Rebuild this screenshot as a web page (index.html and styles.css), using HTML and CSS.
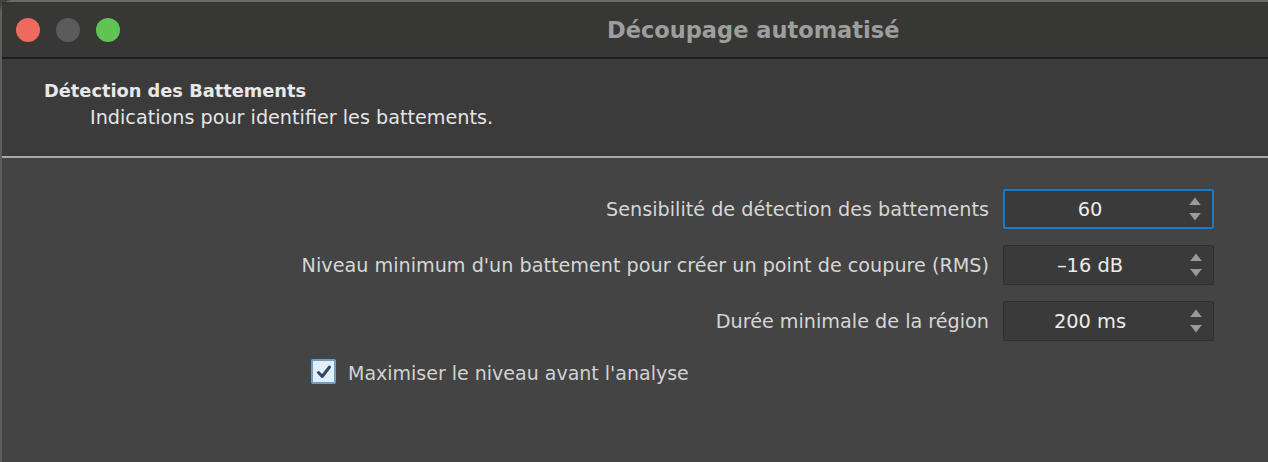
FILE: index.html
```html
<!DOCTYPE html>
<html lang="fr">
<head>
<meta charset="utf-8">
<title>Découpage automatisé</title>
<link rel="stylesheet" href="styles.css">
</head>
<body>
<div class="window">
  <div class="titlebar">
    <div class="lights">
      <span class="light red"></span>
      <span class="light gray"></span>
      <span class="light green"></span>
    </div>
    <div class="title">Découpage automatisé</div>
  </div>
  <div class="header">
    <div class="h-title">Détection des Battements</div>
    <div class="h-sub">Indications pour identifier les battements.</div>
  </div>
  <div class="content">
    <div class="rows">
      <div class="row">
        <label class="label">Sensibilité de détection des battements</label>
        <div class="spin focused">
          <span class="val">60</span>
          <svg class="arrows" width="12" height="26" viewBox="0 0 12 26"><path d="M6 1.5 L11.8 9 L0.2 9 Z" fill="#9a9a9a"/><path d="M6 24.5 L11.8 17 L0.2 17 Z" fill="#9a9a9a"/></svg>
        </div>
      </div>
      <div class="row">
        <label class="label">Niveau minimum d'un battement pour créer un point de coupure (RMS)</label>
        <div class="spin">
          <span class="val">–16 dB</span>
          <svg class="arrows" width="12" height="26" viewBox="0 0 12 26"><path d="M6 1.5 L11.8 9 L0.2 9 Z" fill="#9a9a9a"/><path d="M6 24.5 L11.8 17 L0.2 17 Z" fill="#9a9a9a"/></svg>
        </div>
      </div>
      <div class="row">
        <label class="label">Durée minimale de la région</label>
        <div class="spin">
          <span class="val">200 ms</span>
          <svg class="arrows" width="12" height="26" viewBox="0 0 12 26"><path d="M6 1.5 L11.8 9 L0.2 9 Z" fill="#9a9a9a"/><path d="M6 24.5 L11.8 17 L0.2 17 Z" fill="#9a9a9a"/></svg>
        </div>
      </div>
    </div>
    <div class="check-row">
      <span class="checkbox">
        <svg width="16" height="16" viewBox="0 0 16 16"><path d="M2.5 8.5 L6.2 12.5 L13.5 3" fill="none" stroke="#2b4a6b" stroke-width="3" stroke-linecap="round" stroke-linejoin="round"/></svg>
      </span>
      <span class="check-label">Maximiser le niveau avant l'analyse</span>
    </div>
  </div>
</div>
</body>
</html>
```
FILE: styles.css
```css
html, body {
  margin: 0;
  padding: 0;
  width: 1268px;
  height: 462px;
  overflow: hidden;
  background: #444444;
  font-family: "DejaVu Sans", "Noto Sans", sans-serif;
}
.window {
  width: 1268px;
  height: 462px;
  display: flex;
  flex-direction: column;
  border-left: 2px solid #5e5e5e;
  border-top: 2px solid #6a6a6a;
  box-sizing: border-box;
  border-top-left-radius: 12px;
  background: #444444;
}
.titlebar {
  height: 55px;
  background: #373736;
  border-bottom: 2px solid #1c1c1c;
  display: flex;
  align-items: center;
  flex-shrink: 0;
}
.lights {
  display: flex;
  gap: 16px;
  margin-left: 14px;
}
.light {
  width: 24px;
  height: 24px;
  border-radius: 50%;
  display: block;
}
.red { background: #ee6a5f; }
.gray { background: #5b5b5b; }
.green { background: #5fc454; }
.title {
  margin-left: 487px;
  font-size: 22.5px;
  font-weight: bold;
  color: #9e9e9e;
}
.header {
  height: 99px;
  background: #3b3b3b;
  border-bottom: 2px solid #a8a8a8;
  box-sizing: border-box;
  padding: 20px 0 0 42px;
  flex-shrink: 0;
  color: #e8e8e8;
}
.h-title {
  font-size: 17.8px;
  font-weight: bold;
  line-height: 24px;
}
.h-sub {
  font-size: 19.2px;
  line-height: 29px;
  margin-left: 46px;
  color: #e4e4e4;
}
.content {
  flex: 1;
  background: #444444;
  padding-top: 31px;
}
.rows {
  display: flex;
  flex-direction: column;
  align-items: flex-end;
  gap: 16px;
  padding-right: 54px;
}
.row {
  display: flex;
  align-items: center;
  gap: 14px;
}
.label {
  font-size: 19.2px;
  color: #d6d6d6;
}
.spin {
  width: 211px;
  height: 40px;
  box-sizing: border-box;
  background: #3a3a3a;
  border: 1px solid #2f2f2f;
  border-radius: 2px;
  display: flex;
  align-items: center;
}
.spin.focused {
  border: 2px solid #1a7bc4;
}
.val {
  flex: 1;
  text-align: center;
  font-size: 19.4px;
  color: #ececec;
  padding-right: 14px;
}
.arrows {
  margin-right: 11px;
  flex-shrink: 0;
}
.check-row {
  display: flex;
  align-items: center;
  gap: 12px;
  margin-top: 18px;
  margin-left: 309px;
}
.checkbox {
  width: 25px;
  height: 25px;
  box-sizing: border-box;
  border: 2px solid #6d9ec8;
  background: #e4eef8;
  border-radius: 2px;
  display: flex;
  align-items: center;
  justify-content: center;
}
.check-label {
  font-size: 19px;
  color: #d2d2d2;
  padding-top: 3px;
}
```
